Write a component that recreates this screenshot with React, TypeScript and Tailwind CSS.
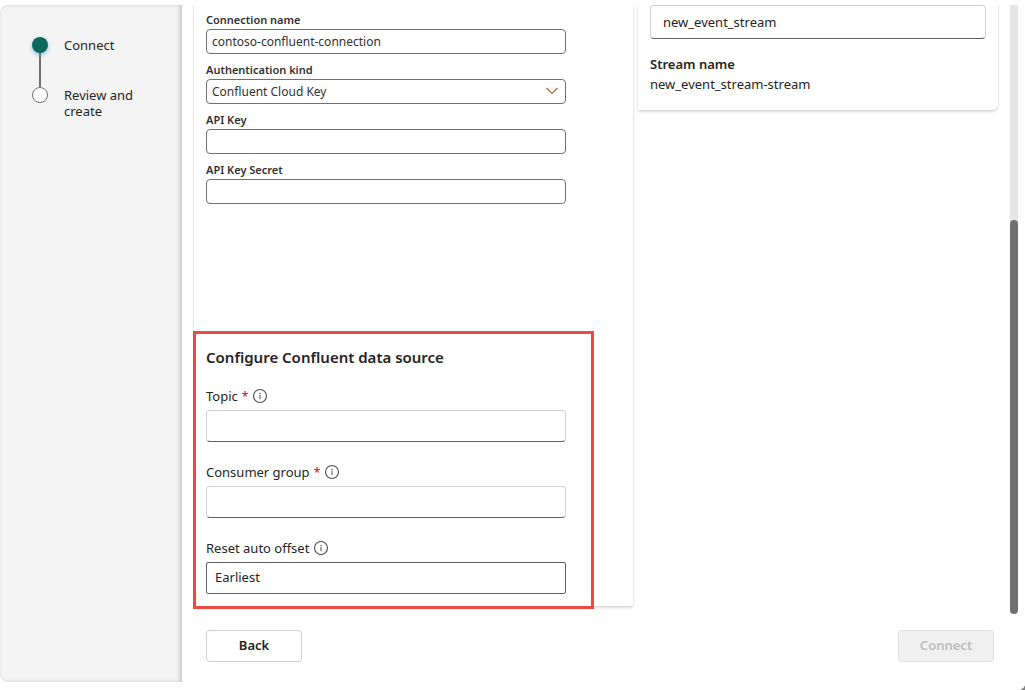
import type { InputHTMLAttributes } from "react";

function InfoIcon() {
  return (
    <svg className="size-4 shrink-0" viewBox="0 0 16 16" fill="none" aria-hidden="true">
      <circle cx="8" cy="8" r="6.5" stroke="#4f4f4f" strokeWidth="1.1" />
      <circle cx="8" cy="5.5" r="0.75" fill="#4f4f4f" />
      <path d="M8 7.4v3.4" stroke="#4f4f4f" strokeWidth="1" strokeLinecap="round" />
    </svg>
  );
}

function CompactField({ id, label, ...rest }: { id: string; label: string } & InputHTMLAttributes<HTMLInputElement>) {
  return (
    <div className="flex flex-col">
      <label htmlFor={id} className="text-[11px] leading-[18px] font-semibold text-[#323130]">{label}</label>
      <input
        id={id}
        {...rest}
        className="h-[25px] w-full rounded-[4px] border border-[#707070] bg-white px-[5px] text-[12px] text-[#323130]"
      />
    </div>
  );
}

function FieldLabel({ id, text, required }: { id: string; text: string; required?: boolean }) {
  return (
    <div className="flex items-center gap-1 text-[13px] leading-5 text-[#242424]">
      <label htmlFor={id}>
        {text}
        {required && <span className="pl-1 text-[12px] leading-none text-[#c50f1f]">*</span>}
      </label>
      <InfoIcon />
    </div>
  );
}

const underlined =
  "h-8 w-full rounded-[4px] border border-[#d1d1d1] border-b-[#616161] bg-white px-3 text-[13px] text-[#242424]";

export default function App() {
  return (
    <div className="relative flex min-h-screen bg-white pt-[5px] pr-[7px] pb-2 font-['Noto_Sans','Open_Sans',sans-serif] text-[#242424]">
      <aside className="w-[182px] shrink-0 rounded-l-lg bg-[#f4f4f4] pt-8 pl-8 shadow-[inset_-3px_0_4px_-1px_#c8c8c8,inset_0_0_3px_#dedede]">
        <ol className="text-[13px] leading-4">
          <li className="flex gap-4">
            <div className="flex w-4 flex-col items-center">
              <span className="size-4 shrink-0 rounded-full bg-[#0c695a] shadow-[0_2px_4px_#8bbfe8]" />
              <span className="w-[2px] flex-1 bg-[#707070]" />
            </div>
            <span className="h-[50px]">Connect</span>
          </li>
          <li className="flex gap-4">
            <span className="size-4 shrink-0 rounded-full border border-[#707070] bg-white" />
            <span className="w-20">Review and create</span>
          </li>
        </ol>
      </aside>

      <main className="flex min-w-0 flex-1 flex-col">
        <div className="flex">
          <div className="flex flex-1 items-start pb-2 pl-3">
            <div className="min-w-0 flex-1 rounded-br-[2px] pt-[6px] pb-3 pl-3 shadow-[0_2px_3px_rgba(0,0,0,0.13),0_0_2px_rgba(0,0,0,0.16)] [clip-path:inset(0_-6px_-6px_-6px)]">
              <form className="flex w-[360px] flex-col gap-[7px]">
                <CompactField id="name" label="Connection name" defaultValue="contoso-confluent-connection" />
                <div className="flex flex-col">
                  <label htmlFor="auth" className="text-[11px] leading-[18px] font-semibold text-[#323130]">
                    Authentication kind
                  </label>
                  <div className="relative">
                    <select
                      id="auth"
                      className="block h-[25px] w-full appearance-none rounded-[4px] border border-[#707070] bg-white px-[5px] text-[12px] text-[#323130]"
                    >
                      <option>Confluent Cloud Key</option>
                    </select>
                    <svg className="pointer-events-none absolute top-2 right-2 h-2 w-3" viewBox="0 0 12 8" fill="none" aria-hidden="true">
                      <path d="M0.5 1 6 6.5 11.5 1" stroke="#a8632f" strokeWidth="1.1" />
                    </svg>
                  </div>
                </div>
                <CompactField id="key" label="API Key" />
                <CompactField id="secret" label="API Key Secret" type="password" />
              </form>

              <section className="relative mt-[141px] w-[360px]">
                <div className="pointer-events-none absolute -top-[14px] -right-7 -bottom-[15px] -left-[13px] border-3 border-[#ea4a44]" />
                <h2 className="text-[15px] leading-6 font-semibold">Configure Confluent data source</h2>
                <div className="mt-[17px] flex flex-col gap-5">
                  <div className="flex flex-col gap-1">
                    <FieldLabel id="topic" text="Topic" required />
                    <input id="topic" className={underlined} />
                  </div>
                  <div className="flex flex-col gap-1">
                    <FieldLabel id="group" text="Consumer group" required />
                    <input id="group" className={underlined} />
                  </div>
                  <div className="flex flex-col gap-1">
                    <FieldLabel id="offset" text="Reset auto offset" />
                    <select
                      id="offset"
                      className="h-8 w-full appearance-none rounded-[2px] border border-[#616161] bg-white px-2 text-[13px] text-[#242424]"
                    >
                      <option>Earliest</option>
                    </select>
                  </div>
                </div>
              </section>
            </div>

            <div className="ml-[5px] w-[360px] shrink-0 rounded-br-md px-3 pb-4 shadow-[0_2px_3px_rgba(0,0,0,0.13),0_0_2px_rgba(0,0,0,0.16)] [clip-path:inset(0_-6px_-6px_-6px)]">
              <input
                aria-label="Eventstream name"
                defaultValue="new_event_stream"
                className="block h-[34px] w-full rounded-[4px] border border-[#d1d1d1] border-b-[#616161] bg-white px-3 text-[13px] text-[#242424]"
              />
              <dl className="mt-[15px] text-[13px] leading-5">
                <dt className="font-semibold">Stream name</dt>
                <dd>new_event_stream-stream</dd>
              </dl>
            </div>
          </div>
          <div className="ml-3 flex w-2 flex-col rounded-b-full bg-[#e6e6e6]">
            <div className="mt-[215px] flex-1 rounded-full bg-[#707070]" />
          </div>
        </div>

        <footer className="flex justify-between px-6 pt-4 text-[13px] font-semibold">
          <button type="button" className="h-8 w-24 rounded-[4px] border border-[#d1d1d1] bg-white">Back</button>
          <button type="button" disabled className="h-8 w-24 rounded-[4px] border border-[#e0e0e0] bg-[#f0f0f0] text-[#bdbdbd]">
            Connect
          </button>
        </footer>
      </main>

      <svg className="absolute right-0 bottom-0 size-[5px]" viewBox="0 0 5 5" aria-hidden="true">
        <path d="M5 0.5V5H0Q3.5 4 5 0.5Z" fill="#808080" />
      </svg>
    </div>
  );
}
